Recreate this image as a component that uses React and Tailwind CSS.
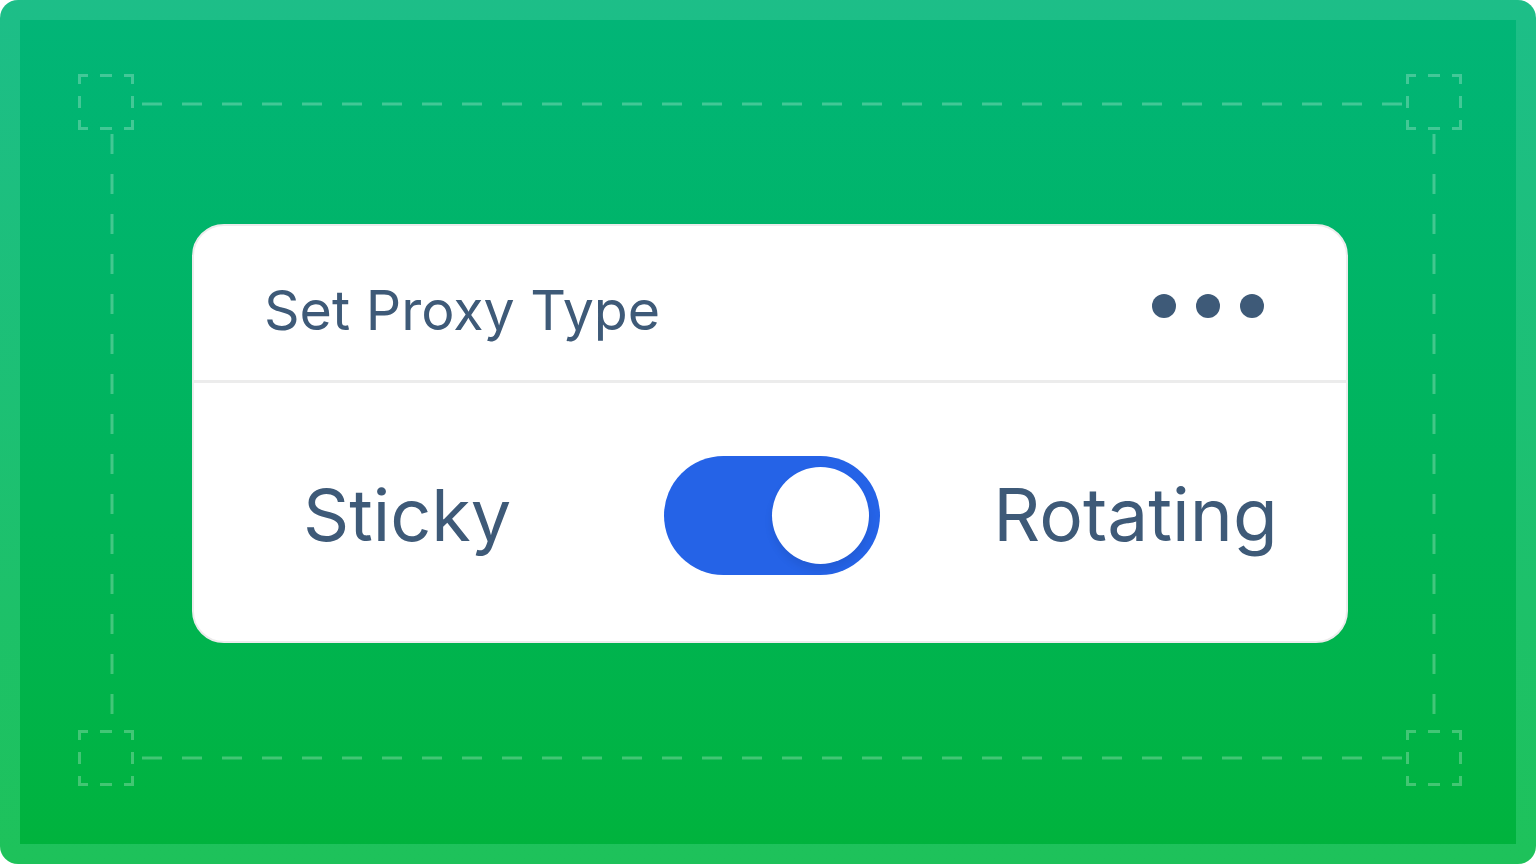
import React from 'react'

function DashFrame() {
  const line = { stroke: 'rgba(255,255,255,0.26)', strokeWidth: 3, strokeDasharray: '20 20', fill: 'none' }
  const sq = (x, y) => (
    <rect
      x={x - 26.5}
      y={y - 26.5}
      width="53"
      height="53"
      style={{ ...line, strokeDasharray: '17 12 12 12' }}
      strokeDashoffset="8.5"
    />
  )
  return (
    <svg className="absolute inset-0 pointer-events-none" width="1536" height="864" viewBox="0 0 1536 864">
      <line x1="142" y1="104" x2="1404" y2="104" style={line} />
      <line x1="142" y1="758" x2="1404" y2="758" style={line} />
      <line x1="112" y1="134" x2="112" y2="730" style={line} />
      <line x1="1434" y1="134" x2="1434" y2="730" style={line} />
      {sq(106, 102)}
      {sq(1434, 102)}
      {sq(106, 758)}
      {sq(1434, 758)}
    </svg>
  )
}

export default function App() {
  return (
    <div className="w-[1536px] h-[864px] rounded-[18px] bg-gradient-to-b from-[#1dbe88] to-[#1ec25a] p-[20px] font-['Inter',sans-serif]">
      <div className="relative h-full w-full bg-gradient-to-b from-[#02b577] to-[#00b33d] flex items-center justify-center">
        <div className="absolute -inset-[20px]">
          <DashFrame />
        </div>
        <div className="relative w-[1156px] h-[419px] bg-white rounded-[32px] border-2 border-[#ececec] flex flex-col mt-[2px] ml-[4px]">
          <div className="h-[157px] shrink-0 flex items-center justify-between pt-[14px] pl-[70px] pr-[82px] border-b-[3px] border-[#ececec]">
            <span className="text-[55.5px] text-[#3e5a78]">Set Proxy Type</span>
            <div className="flex gap-[20px] -mt-[8px]">
              <span className="w-[24px] h-[24px] rounded-full bg-[#3e5a78]" />
              <span className="w-[24px] h-[24px] rounded-full bg-[#3e5a78]" />
              <span className="w-[24px] h-[24px] rounded-full bg-[#3e5a78]" />
            </div>
          </div>
          <div className="flex-1 flex items-center pt-[7px] pl-[109px] text-[72px] text-[#3e5a78]">
            <span>Sticky</span>
            <div className="ml-[153px] w-[216px] h-[119px] rounded-full bg-[#2563e7] flex items-center justify-end pr-[11px]">
              <span className="w-[97px] h-[97px] rounded-full bg-white shadow-[0_6px_8px_rgba(0,0,0,0.08)]" />
            </div>
            <span className="ml-[113px] text-[73px]">Rotating</span>
          </div>
        </div>
      </div>
    </div>
  )
}
